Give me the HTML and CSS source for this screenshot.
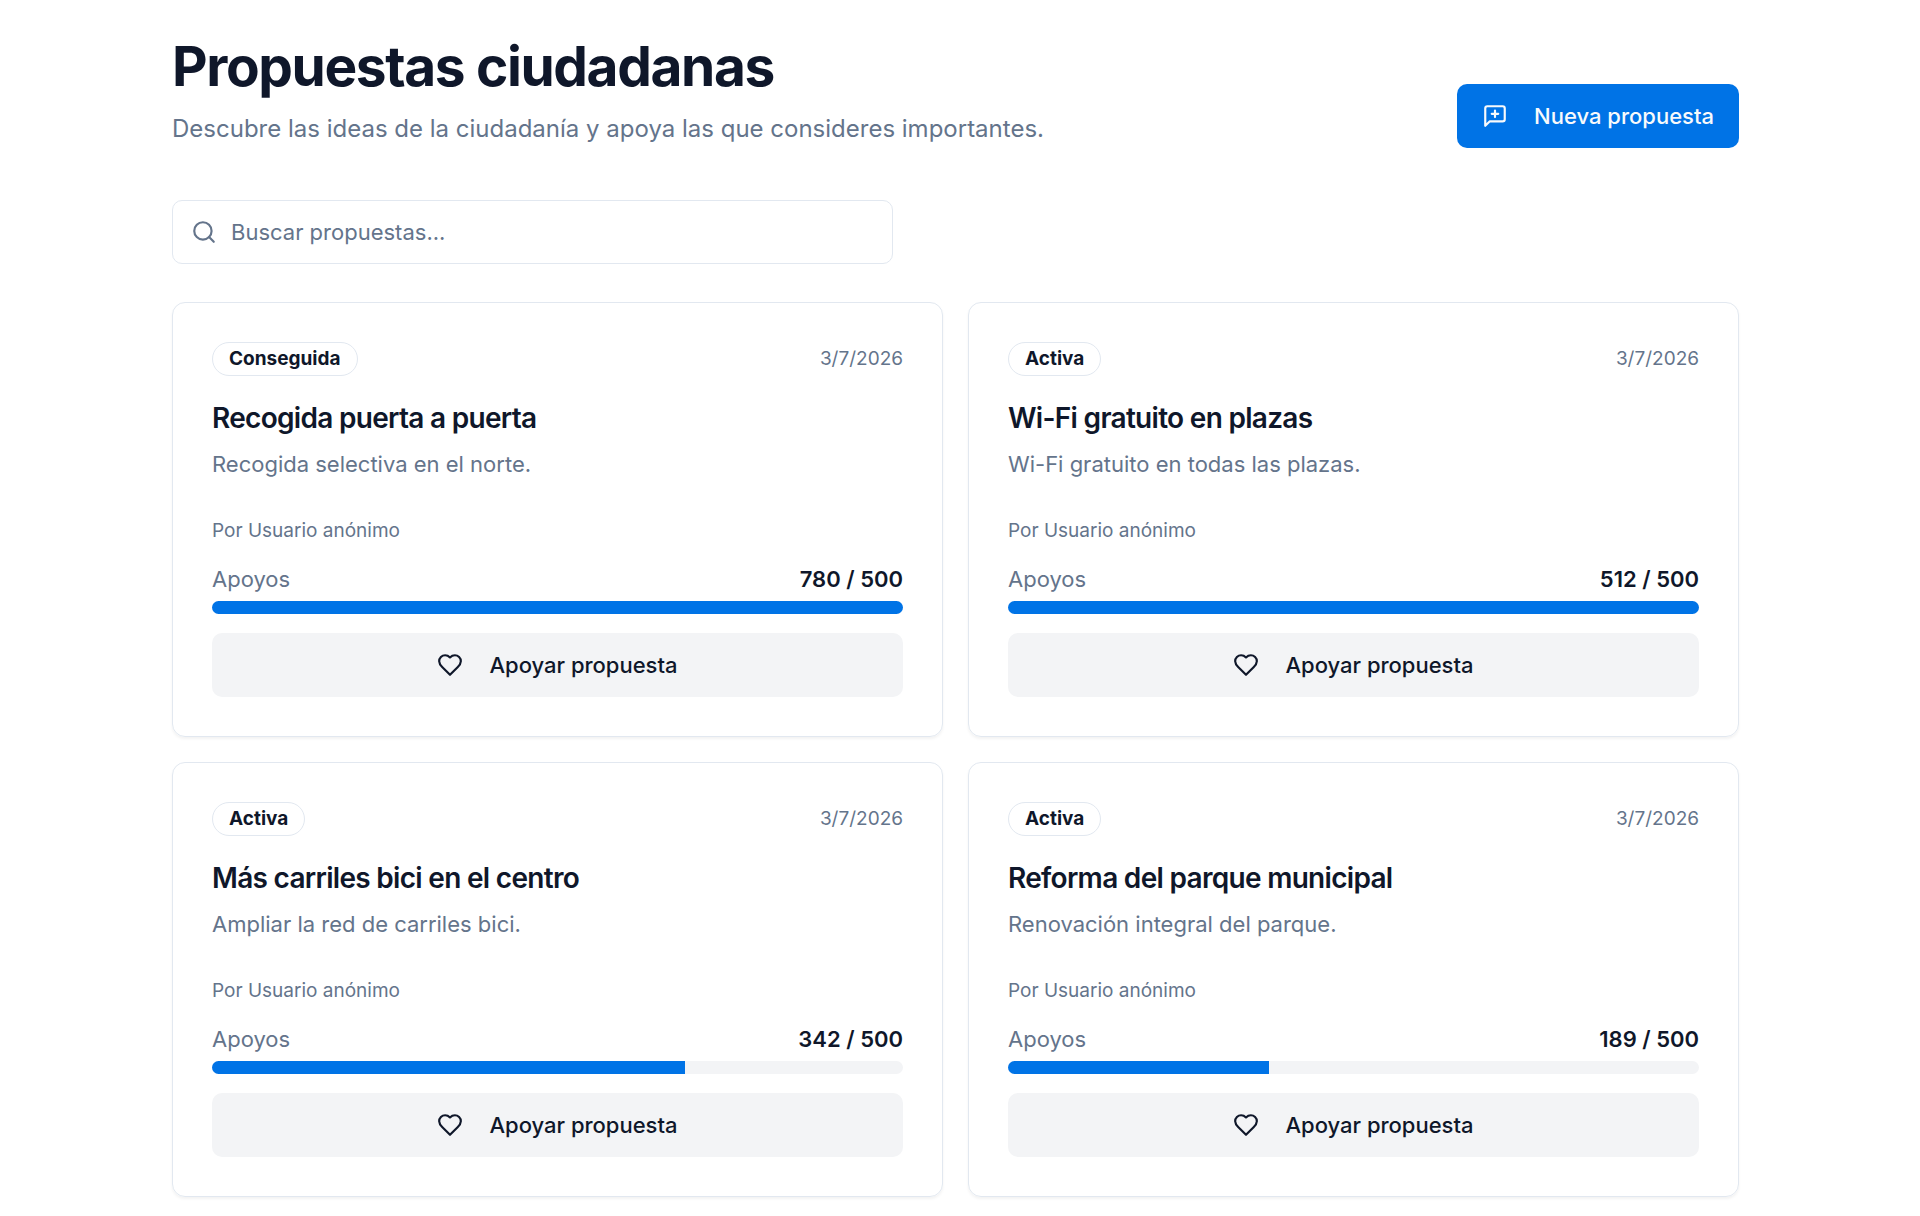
FILE: index.html
```html
<!DOCTYPE html>
<html lang="es">
<head>
  <meta charset="UTF-8">
  <meta name="viewport" content="width=device-width, initial-scale=1.0">
  <title>Propuestas ciudadanas</title>
  <link rel="stylesheet" href="styles.css">
</head>
<body>
  <!-- Shared icons -->
  <svg class="sprite" aria-hidden="true">
    <symbol id="icon-heart" viewBox="0 0 24 24">
      <path d="M19 14c1.49-1.46 3-3.21 3-5.5A5.5 5.5 0 0 0 16.5 3c-1.76 0-3 .5-4.5 2-1.5-1.5-2.74-2-4.5-2A5.5 5.5 0 0 0 2 8.5c0 2.3 1.5 4.05 3 5.5l7 7Z"/>
    </symbol>
  </svg>

  <main class="page">
    <header class="page-header">
      <div class="heading">
        <h1>Propuestas ciudadanas</h1>
        <p class="subtitle">Descubre las ideas de la ciudadanía y apoya las que consideres importantes.</p>
      </div>
      <button type="button" class="btn btn-primary">
        <svg class="icon" viewBox="0 0 24 24" aria-hidden="true">
          <path d="M21 15a2 2 0 0 1-2 2H7l-4 4V5a2 2 0 0 1 2-2h14a2 2 0 0 1 2 2z"/>
          <path d="M12 7v6M9 10h6"/>
        </svg>
        Nueva propuesta
      </button>
    </header>

    <label class="search">
      <svg class="icon" viewBox="0 0 24 24" aria-hidden="true">
        <circle cx="11" cy="11" r="8"/>
        <path d="m21 21-4.3-4.3"/>
      </svg>
      <input type="search" placeholder="Buscar propuestas..." aria-label="Buscar propuestas">
    </label>

    <section class="proposals">
      <article class="card">
        <div class="card-top">
          <span class="badge">Conseguida</span>
          <time datetime="2026-07-03">3/7/2026</time>
        </div>
        <h2>Recogida puerta a puerta</h2>
        <p class="description">Recogida selectiva en el norte.</p>
        <p class="author">Por Usuario anónimo</p>
        <div class="votes">
          <span>Apoyos</span>
          <strong>780 / 500</strong>
        </div>
        <div class="progress"><div class="progress-fill" style="width: 100%"></div></div>
        <button type="button" class="btn btn-secondary">
          <svg class="icon" aria-hidden="true"><use href="#icon-heart"/></svg>
          Apoyar propuesta
        </button>
      </article>

      <article class="card">
        <div class="card-top">
          <span class="badge">Activa</span>
          <time datetime="2026-07-03">3/7/2026</time>
        </div>
        <h2>Wi-Fi gratuito en plazas</h2>
        <p class="description">Wi-Fi gratuito en todas las plazas.</p>
        <p class="author">Por Usuario anónimo</p>
        <div class="votes">
          <span>Apoyos</span>
          <strong>512 / 500</strong>
        </div>
        <div class="progress"><div class="progress-fill" style="width: 100%"></div></div>
        <button type="button" class="btn btn-secondary">
          <svg class="icon" aria-hidden="true"><use href="#icon-heart"/></svg>
          Apoyar propuesta
        </button>
      </article>

      <article class="card">
        <div class="card-top">
          <span class="badge">Activa</span>
          <time datetime="2026-07-03">3/7/2026</time>
        </div>
        <h2>Más carriles bici en el centro</h2>
        <p class="description">Ampliar la red de carriles bici.</p>
        <p class="author">Por Usuario anónimo</p>
        <div class="votes">
          <span>Apoyos</span>
          <strong>342 / 500</strong>
        </div>
        <div class="progress"><div class="progress-fill" style="width: 68.4%"></div></div>
        <button type="button" class="btn btn-secondary">
          <svg class="icon" aria-hidden="true"><use href="#icon-heart"/></svg>
          Apoyar propuesta
        </button>
      </article>

      <article class="card">
        <div class="card-top">
          <span class="badge">Activa</span>
          <time datetime="2026-07-03">3/7/2026</time>
        </div>
        <h2>Reforma del parque municipal</h2>
        <p class="description">Renovación integral del parque.</p>
        <p class="author">Por Usuario anónimo</p>
        <div class="votes">
          <span>Apoyos</span>
          <strong>189 / 500</strong>
        </div>
        <div class="progress"><div class="progress-fill" style="width: 37.8%"></div></div>
        <button type="button" class="btn btn-secondary">
          <svg class="icon" aria-hidden="true"><use href="#icon-heart"/></svg>
          Apoyar propuesta
        </button>
      </article>
    </section>
  </main>
</body>
</html>
```
FILE: styles.css
```css
* {
  margin: 0;
  padding: 0;
  box-sizing: border-box;
}

body {
  font-family: Inter, 'Liberation Sans', sans-serif;
  font-size: 22px;
  line-height: 32px;
  background: #fff;
  color: #0f172a;
}

.sprite {
  display: none;
}

.page {
  padding: 34px 181px 18px 172px;
}

.page-header {
  display: flex;
  justify-content: space-between;
  align-items: flex-end;
  gap: 26px;
  margin-bottom: 52px;
}

h1 {
  font-size: 55px;
  line-height: 64px;
  font-weight: 700;
  letter-spacing: -0.025em;
  margin-bottom: 12px;
}

.subtitle {
  font-size: 24px;
  line-height: 38px;
  color: #64748b;
}

.icon {
  width: 26px;
  height: 26px;
  flex-shrink: 0;
  fill: none;
  stroke: currentColor;
  stroke-width: 2;
  stroke-linecap: round;
  stroke-linejoin: round;
}

.btn {
  display: flex;
  align-items: center;
  justify-content: center;
  gap: 26px;
  height: 64px;
  padding: 0 25px;
  border: none;
  border-radius: 10px;
  font: inherit;
  font-weight: 500;
  white-space: nowrap;
  cursor: pointer;
}

.btn-primary {
  background: #0073e6;
  color: #f8fafc;
}

.btn-secondary {
  width: 100%;
  background: #f3f4f6;
  color: #0f172a;
}

.search {
  display: flex;
  align-items: center;
  gap: 14px;
  width: 46%;
  height: 64px;
  padding: 0 18px;
  margin-bottom: 38px;
  border: 1px solid #e2e8f0;
  border-radius: 10px;
  color: #64748b;
}

.search input {
  flex: 1;
  min-width: 0;
  border: none;
  outline: none;
  background: none;
  font: inherit;
  color: #0f172a;
}

.search input::placeholder {
  color: #64748b;
}

.proposals {
  display: grid;
  grid-template-columns: repeat(2, 1fr);
  gap: 25px;
}

.card {
  padding: 39px;
  border: 1px solid #e2e8f0;
  border-radius: 13px;
  box-shadow: 0 2px 3px rgba(0, 0, 0, 0.05);
}

.card-top {
  display: flex;
  justify-content: space-between;
  align-items: center;
  margin-bottom: 24px;
}

.badge {
  padding: 3px 16px;
  border: 1px solid #e2e8f0;
  border-radius: 17px;
  font-size: 19px;
  line-height: 26px;
  font-weight: 700;
}

time {
  font-size: 19px;
  line-height: 26px;
  color: #64748b;
}

h2 {
  font-size: 28px;
  line-height: 36px;
  font-weight: 600;
  letter-spacing: -0.025em;
  margin-bottom: 12px;
}

.description {
  color: #64748b;
  margin-bottom: 38px;
}

.author {
  font-size: 19px;
  line-height: 26px;
  color: #64748b;
  margin-bottom: 19px;
}

.votes {
  display: flex;
  justify-content: space-between;
  margin-bottom: 6px;
}

.votes span {
  color: #64748b;
}

.votes strong {
  font-weight: 600;
}

.progress {
  height: 13px;
  margin-bottom: 19px;
  border-radius: 7px;
  background: #f3f4f6;
  overflow: hidden;
}

.progress-fill {
  height: 100%;
  background: #0073e6;
}
```
